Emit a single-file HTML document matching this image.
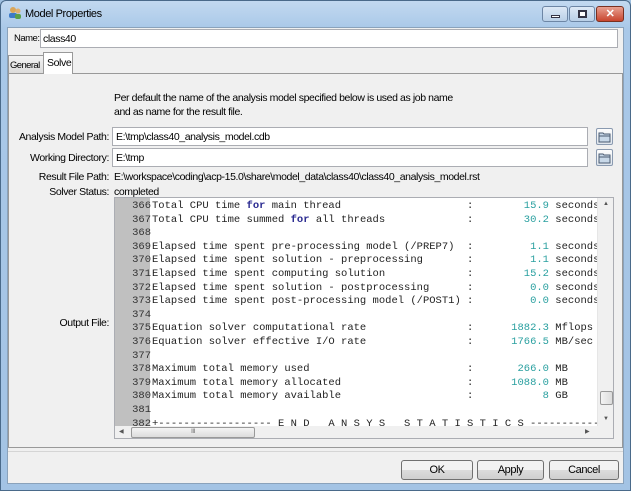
<!DOCTYPE html><html><head><style>
*{margin:0;padding:0;box-sizing:border-box}
body{width:631px;height:491px;overflow:hidden;background:#9fc0e0;font-family:"Liberation Sans",sans-serif;font-size:10.5px;letter-spacing:-0.4px;color:#000;position:relative}
.a{position:absolute}
.win{left:0;top:0;width:631px;height:491px;background:linear-gradient(#c2d9f0,#a9c8e8 28px,#a3c3e4);border:1px solid #4a6a8a;border-radius:6px 6px 0 0}
.client{left:7px;top:27px;width:617px;height:457px;background:#f0f0f0;border:1px solid #8aa2bb}
.inp{background:#fff;border:1px solid #abadb3;padding:3px 3px;white-space:nowrap}
.lbl{text-align:right;white-space:nowrap}
.btn{border:1px solid #707070;border-radius:3px;background:linear-gradient(#f2f2f2 50%,#dcdcdc 50%,#cfcfcf);text-align:center;line-height:18px;font-size:11px}
.mono{font-family:"Liberation Mono",monospace;font-size:10.5px;letter-spacing:0;line-height:13.6px;white-space:pre}
.fld{width:17px;height:17px;border:1px solid #8a9ab0;border-radius:2px;background:linear-gradient(#fdfdfd,#dfe6ee)}
</style></head><body>
<div class="a win"></div>
<div class="a" style="left:8px;top:6px;width:14px;height:13px;">
<svg width="14" height="13"><circle cx="5" cy="4" r="3" fill="#d9a65a"/><rect x="1" y="7" width="8" height="5" rx="2" fill="#3d7bc8"/><circle cx="10" cy="5" r="2.5" fill="#e0b070"/><rect x="7" y="8" width="6" height="5" rx="2" fill="#5aa04a"/></svg></div>
<div class="a" style="left:25px;top:8px;font-size:11px">Model Properties</div>
<div class="a" style="left:542px;top:6px;width:26px;height:16px;border:1px solid #6d86a5;border-radius:3px;background:linear-gradient(#dde9f6,#b9cfe7)"><div class="a" style="left:8px;top:8px;width:9px;height:3px;background:#fff;border:1px solid #334"></div></div>
<div class="a" style="left:569px;top:6px;width:26px;height:16px;border:1px solid #6d86a5;border-radius:3px;background:linear-gradient(#dde9f6,#b9cfe7)"><div class="a" style="left:8px;top:3px;width:9px;height:8px;border:2px solid #334;background:#fff"></div></div>
<div class="a" style="left:596px;top:6px;width:28px;height:16px;border:1px solid #7a3020;border-radius:3px;background:linear-gradient(#e8a090,#c8452e);color:#fff;font-weight:bold;text-align:center;line-height:14px;font-size:11px">✕</div>
<div class="a client"></div>
<div class="a" style="left:14px;top:33px;font-size:9.5px;letter-spacing:-0.5px">Name:</div>
<div class="a inp" style="left:40px;top:29px;width:578px;height:19px;padding-left:2px">class40</div>
<div class="a" style="left:8px;top:55px;width:36px;height:19px;border:1px solid #999;background:linear-gradient(#f4f4f4,#dcdcdc);padding:4px 1px;font-size:9.5px;letter-spacing:-0.6px;white-space:nowrap">General</div>
<div class="a" style="left:43px;top:52px;width:30px;height:22px;border:1px solid #999;border-bottom:none;background:#fff;padding:4px 3px;z-index:2">Solve</div>
<div class="a" style="left:8px;top:73px;width:615px;height:375px;border:1px solid #999;background:#f0f0f0"></div>
<div class="a" style="left:114px;top:91px;line-height:14px">Per default the name of the analysis model specified below is used as job name<br>and as name for the result file.</div>
<div class="a lbl" style="right:522px;top:131px">Analysis Model Path:</div>
<div class="a inp" style="left:112px;top:127px;width:476px;height:19px">E:\tmp\class40_analysis_model.cdb</div>
<div class="a lbl" style="right:522px;top:152px">Working Directory:</div>
<div class="a inp" style="left:112px;top:148px;width:476px;height:19px">E:\tmp</div>
<div class="a fld" style="left:596px;top:128px"><svg width="15" height="15"><path d="M2 4h4l1 1h6v8H2z" fill="#c8d8e8" stroke="#4a5a70"/><path d="M2 7h11" stroke="#4a5a70"/></svg></div>
<div class="a fld" style="left:596px;top:149px"><svg width="15" height="15"><path d="M2 4h4l1 1h6v8H2z" fill="#c8d8e8" stroke="#4a5a70"/><path d="M2 7h11" stroke="#4a5a70"/></svg></div>
<div class="a lbl" style="right:522px;top:171px">Result File Path:</div>
<div class="a" style="left:114px;top:171px">E:\workspace\coding\acp-15.0\share\model_data\class40\class40_analysis_model.rst</div>
<div class="a lbl" style="right:522px;top:186px">Solver Status:</div>
<div class="a" style="left:114px;top:186px">completed</div>
<div class="a lbl" style="right:522px;top:317px">Output File:</div>
<div class="a" style="left:114px;top:197px;width:500px;height:242px;border:1px solid #abadb3;background:#fff;overflow:hidden">
<div class="a" style="left:0;top:0;width:35px;height:228px;background:#c0c0c0"></div>
<div class="a mono" style="left:0;top:2px;width:36px;text-align:right;color:#333">366
367
368
369
370
371
372
373
374
375
376
377
378
379
380
381
382</div>
<div class="a mono" style="left:37px;top:2px;color:#222">Total CPU time <span style="color:#2a2a90;font-weight:bold">for</span> main thread                    :        <span style="color:#2aa0a0">15.9</span> seconds
Total CPU time summed <span style="color:#2a2a90;font-weight:bold">for</span> all threads             :        <span style="color:#2aa0a0">30.2</span> seconds

Elapsed time spent pre-processing model (/PREP7)  :         <span style="color:#2aa0a0">1.1</span> seconds
Elapsed time spent solution - preprocessing       :         <span style="color:#2aa0a0">1.1</span> seconds
Elapsed time spent computing solution             :        <span style="color:#2aa0a0">15.2</span> seconds
Elapsed time spent solution - postprocessing      :         <span style="color:#2aa0a0">0.0</span> seconds
Elapsed time spent post-processing model (/POST1) :         <span style="color:#2aa0a0">0.0</span> seconds

Equation solver computational rate                :      <span style="color:#2aa0a0">1882.3</span> Mflops
Equation solver effective I/O rate                :      <span style="color:#2aa0a0">1766.5</span> MB/sec

Maximum total memory used                         :       <span style="color:#2aa0a0">266.0</span> MB
Maximum total memory allocated                    :      <span style="color:#2aa0a0">1088.0</span> MB
Maximum total memory available                    :           <span style="color:#2aa0a0">8</span> GB

+------------------ E N D   A N S Y S   S T A T I S T I C S -----------</div>
<div class="a" style="left:482px;top:0;width:17px;height:228px;background:#f0f0f0;border-left:1px solid #e6e6e6"><div class="a" style="left:2px;top:193px;width:13px;height:14px;border:1px solid #999;border-radius:2px;background:linear-gradient(90deg,#f4f4f4,#dcdcdc)"></div><div class="a" style="left:5px;top:3px;font-size:6px;color:#555">▲</div><div class="a" style="left:5px;top:218px;font-size:6px;color:#555">▼</div></div>
<div class="a" style="left:0;top:228px;width:499px;height:13px;background:#f0f0f0"><div class="a" style="left:16px;top:1px;width:124px;height:11px;border:1px solid #999;border-radius:2px;background:linear-gradient(#f4f4f4,#dcdcdc);font-size:6px;text-align:center;line-height:9px;color:#666">III</div><div class="a" style="left:4px;top:2px;font-size:6px;color:#555">◀</div><div class="a" style="left:470px;top:2px;font-size:6px;color:#555">▶</div></div>
</div>
<div class="a" style="left:8px;top:451px;width:615px;height:1px;background:#d5d5d5"></div>
<div class="a btn" style="left:401px;top:460px;width:72px;height:20px">OK</div>
<div class="a btn" style="left:477px;top:460px;width:67px;height:20px">Apply</div>
<div class="a btn" style="left:549px;top:460px;width:70px;height:20px">Cancel</div>
</body></html>
